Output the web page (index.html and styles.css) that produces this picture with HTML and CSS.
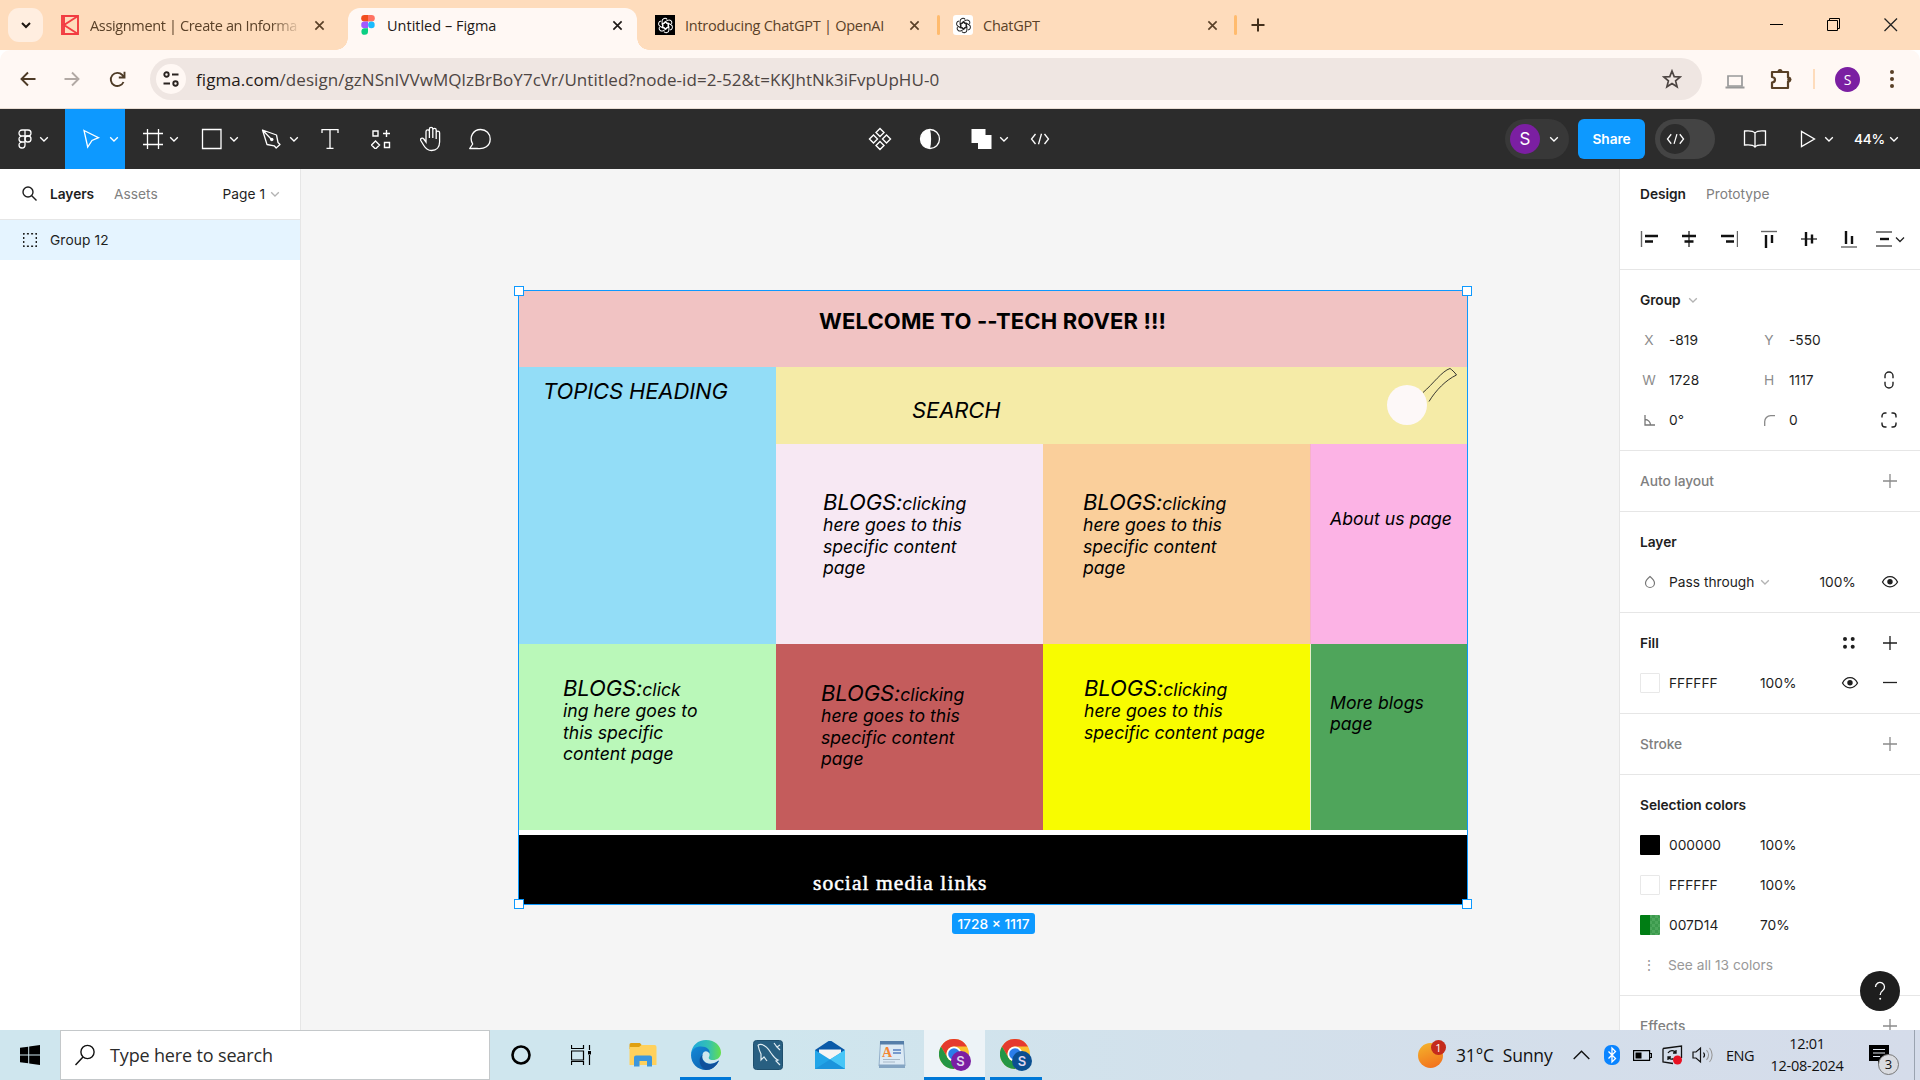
FILE: index.html
```html
<!DOCTYPE html>
<html lang="en">
<head>
<meta charset="utf-8">
<title>Untitled – Figma</title>
<link rel="stylesheet" href="styles.css">
</head>
<body>
<svg class="defs" width="0" height="0">
  <symbol id="chev" viewBox="0 0 10 10"><path d="M1.2 3.2 5 7l3.800-3.800" fill="none" stroke="currentColor" stroke-width="1.300"/></symbol>
  <symbol id="close" viewBox="0 0 12 12"><path d="M1.500 1.500l9 9M10.500 1.500l-9 9" fill="none" stroke="currentColor" stroke-width="1.800"/></symbol>
  <symbol id="plus" viewBox="0 0 16 16"><path d="M8 1v14M1 8h14" fill="none" stroke="currentColor" stroke-width="1.300"/></symbol>
  <symbol id="eye" viewBox="0 0 18 14"><path d="M1.500 7C5-.2 13-.2 16.500 7 13 13.400 5 13.400 1.500 7z" fill="none" stroke="currentColor" stroke-width="1.300"/><circle cx="9" cy="6.800" r="2.700" fill="currentColor"/></symbol>
  <symbol id="knot" viewBox="0 0 20 20"><g fill="none" stroke="currentColor" stroke-width="1.200"><path id="petal" d="M10 6.200 13.300 8v4.600M10 6.200 6 8.500V4.800a3.300 3.300 0 0 1 6-1.900"/><path d="M10 6.200 13.300 8v4.600M10 6.200 6 8.500V4.800a3.300 3.300 0 0 1 6-1.900" transform="rotate(60 10 10)"/><path d="M10 6.200 13.300 8v4.600M10 6.200 6 8.500V4.800a3.300 3.300 0 0 1 6-1.900" transform="rotate(120 10 10)"/><path d="M10 6.200 13.300 8v4.600M10 6.200 6 8.500V4.800a3.300 3.300 0 0 1 6-1.900" transform="rotate(180 10 10)"/><path d="M10 6.200 13.300 8v4.600M10 6.200 6 8.500V4.800a3.300 3.300 0 0 1 6-1.900" transform="rotate(240 10 10)"/><path d="M10 6.200 13.300 8v4.600M10 6.200 6 8.500V4.800a3.300 3.300 0 0 1 6-1.900" transform="rotate(300 10 10)"/></g></symbol>
  <symbol id="code" viewBox="0 0 20 12"><path d="M5.500 1 1.500 6l4 5M14.500 1l4 5-4 5M11.500.8l-3 10.400" fill="none" stroke="currentColor" stroke-width="1.300"/></symbol>
  <symbol id="chrome" viewBox="0 0 32 32"><circle cx="15" cy="15" r="15" fill="#fbc02d"/><path d="M2 7.500A15 15 0 0 1 28 7.500H15a7.500 7.500 0 0 0-6.500 11.300z" fill="#e53a2e"/><path d="M2 7.500A15 15 0 0 0 15 30l6.500-11.200a7.500 7.500 0 0 1-13 0z" fill="#249645"/><circle cx="15" cy="15" r="7.500" fill="#fff"/><circle cx="15" cy="15" r="5.800" fill="#2b7de9"/></symbol>
</svg>

<header class="tabstrip">
  <button class="tab-menu"><svg width="12" height="12" viewBox="0 0 12 12"><path d="M2 4l4 4 4-4" fill="none" stroke="#1d1510" stroke-width="2"/></svg></button>
  <div class="tab tab-a">
    <svg width="18" height="20" viewBox="0 0 18 20"><path d="M1 1h16v18H1zM17 1 3 10l14 9M3 1v18" fill="none" stroke="#f23c41" stroke-width="1.900"/></svg>
    <span class="tab-title fade">Assignment | Create an Informa</span>
    <svg class="x" width="11" height="11"><use href="#close"/></svg>
  </div>
  <div class="tab active">
    <svg width="14" height="20" viewBox="0 0 14 20"><path d="M7 0H3.500a3.300 3.300 0 0 0 0 6.600H7z" fill="#f24e1e"/><path d="M7 0h3.500a3.300 3.300 0 0 1 0 6.600H7z" fill="#ff7262"/><path d="M7 6.600H3.500a3.300 3.300 0 0 0 0 6.600H7z" fill="#a259ff"/><circle cx="10.400" cy="9.900" r="3.300" fill="#1abcfe"/><path d="M7 13.200H3.500A3.300 3.300 0 1 0 7 16.500z" fill="#0acf83"/></svg>
    <span class="tab-title">Untitled – Figma</span>
    <svg class="x" width="11" height="11"><use href="#close"/></svg>
  </div>
  <div class="tab tab-c">
    <span class="fav dark"><svg width="17" height="17"><use href="#knot"/></svg></span>
    <span class="tab-title">Introducing ChatGPT | OpenAI</span>
    <svg class="x" width="11" height="11"><use href="#close"/></svg>
  </div>
  <div class="tab tab-d">
    <span class="fav"><svg width="17" height="17"><use href="#knot"/></svg></span>
    <span class="tab-title">ChatGPT</span>
    <svg class="x" width="11" height="11"><use href="#close"/></svg>
  </div>
  <svg class="newtab" width="14" height="14" viewBox="0 0 14 14"><path d="M7 .5v13M.5 7h13" stroke="#43301c" stroke-width="2"/></svg>
  <div class="window-controls">
    <svg width="14" height="14" viewBox="0 0 14 14"><path d="M0 6.500h13" stroke="#000"/></svg>
    <svg width="14" height="14" viewBox="0 0 14 14"><path d="M.5 2.500h10v10H.5zM2.500 2.500v-2h10v10h-2" fill="none" stroke="#000"/></svg>
    <svg width="14" height="14" viewBox="0 0 14 14"><path d="M.5.5l12.500 12.500M13 .5.500 13" stroke="#222" stroke-width="1.300"/></svg>
  </div>
</header>

<nav class="navbar">
  <svg class="nav-back" width="16" height="16" viewBox="0 0 16 16"><path d="M15.500 8H2M8 1.500 1.500 8 8 14.500" fill="none" stroke="#4e3b26" stroke-width="1.900"/></svg>
  <svg class="nav-fwd" width="16" height="16" viewBox="0 0 16 16"><path d="M.5 8H14M8 1.500 14.500 8 8 14.500" fill="none" stroke="#b2a9a4" stroke-width="1.900"/></svg>
  <svg class="nav-reload" width="17" height="17" viewBox="0 0 17 17"><path d="M14.500 11A6.600 6.600 0 1 1 13.300 4l1.500 2M15.500.8v5.700H9.800" fill="none" stroke="#4e3b26" stroke-width="1.900"/></svg>
  <div class="omnibox">
    <span class="site-info"><svg width="16" height="16" viewBox="0 0 16 16"><g fill="none" stroke="#2a2320" stroke-width="1.900"><circle cx="3.500" cy="3.500" r="2.200"/><path d="M9 3.500h6.500M.5 12.500H7"/><circle cx="12.500" cy="12.500" r="2.200"/></g></svg></span>
    <span class="url"><b>figma.com</b>/design/gzNSnIVVwMQlzBrBoY7cVr/Untitled?node-id=2-52&amp;t=KKJhtNk3iFvpUpHU-0</span>
    <svg width="20" height="20" viewBox="0 0 20 20"><path d="M10 2l2.200 5.600 6 .4-4.600 3.900 1.500 5.900L10 14.500l-5.100 3.300 1.500-5.900L1.800 8l6-.4z" fill="none" stroke="#4d4542" stroke-width="1.700"/></svg>
  </div>
  <svg class="nav-laptop" width="20" height="14" viewBox="0 0 20 14"><path d="M3 1h14v10H3z" fill="none" stroke="#999" stroke-width="1.700"/><path d="M.5 12.500h19" stroke="#999" stroke-width="2"/></svg>
  <svg class="nav-puzzle" width="22" height="22" viewBox="0 0 22 22"><path d="M2 4h16v5.500c3 0 3 4 0 4V20H2v-5.500c4-.5 4-5 0-5.500z" fill="none" stroke="#594026" stroke-width="2.200" stroke-linejoin="round"/><path d="M7.500 3.500a2.500 2.500 0 0 1 5 0z" fill="#594026"/><circle cx="19.300" cy="11.500" r="2" fill="#594026"/></svg>
  <i class="nav-sep"></i>
  <span class="avatar small">S</span>
  <svg class="nav-dots" width="4" height="18" viewBox="0 0 4 18" fill="#594026"><circle cx="2" cy="2" r="2"/><circle cx="2" cy="9" r="2"/><circle cx="2" cy="16" r="2"/></svg>
</nav>

<div class="toolbar">
  <div class="tool menu"><svg width="14" height="20" viewBox="0 0 14 20"><path d="M7 1H4a3 3 0 0 0 0 6h3zM7 1h3a3 3 0 0 1 0 6H7zM7 7H4a3 3 0 0 0 0 6h3zM7 13H4a3 3 0 1 0 3 3z" fill="none" stroke="#fff" stroke-width="1.300"/><circle cx="10" cy="10" r="3" fill="none" stroke="#fff" stroke-width="1.300"/></svg><svg class="chev"><use href="#chev"/></svg></div>
  <div class="tool drop selected"><svg width="24" height="24" viewBox="0 0 24 24"><path d="M4 3.500l14.500 7.200-6.500 2.800-4.300 6.500z" fill="none" stroke="#fff" stroke-width="1.300"/></svg><svg class="chev"><use href="#chev"/></svg></div>
  <div class="tool drop"><svg width="24" height="24" viewBox="0 0 24 24"><path d="M7.500 2v20M18.500 2v20M3 6.500h20M3 17.500h20" stroke="#fff" stroke-width="1.300"/></svg><svg class="chev"><use href="#chev"/></svg></div>
  <div class="tool drop"><svg width="24" height="24" viewBox="0 0 24 24"><path d="M2.500 2.500h18.500v19h-18.500z" fill="none" stroke="#fff" stroke-width="1.300"/></svg><svg class="chev"><use href="#chev"/></svg></div>
  <div class="tool drop"><svg width="24" height="24" viewBox="0 0 24 24"><path d="M2.500 3l14 5 1.500 7.500 2 2-3.800 3.500-2-2.200L7 17.500zM3 3.500l8.500 9" fill="none" stroke="#fff" stroke-width="1.300" stroke-linejoin="round"/><circle cx="11.800" cy="12.500" r="1.700" fill="#fff"/></svg><svg class="chev"><use href="#chev"/></svg></div>
  <div class="tool w50"><svg width="20" height="22" viewBox="0 0 20 22"><path d="M2 5V1.700h16V5M10 1.700v18.600M6.500 20.300h7" fill="none" stroke="#fff" stroke-width="1.300"/></svg></div>
  <div class="tool w52"><svg width="20" height="20" viewBox="0 0 20 20"><path d="M2 2h5v5H2zM13.500 13.500h5v5h-5zM4.500 12l4 4-4 4-4-4zM15.500 1v7M12 4.500h7" fill="none" stroke="#fff" stroke-width="1.400"/></svg></div>
  <div class="tool w49"><svg width="24" height="26" viewBox="0 0 24 26"><path d="M6 16V5.500a1.700 1.700 0 0 1 3.400 0V12 3a1.700 1.700 0 0 1 3.400 0v9V4a1.700 1.700 0 0 1 3.400 0v9V6.800a1.700 1.700 0 0 1 3.400 0V16c0 5-3 8.500-8 8.500-4 0-6-2-7.800-5L.8 14.500c-1-2 1.500-3.300 3-1.500z" fill="none" stroke="#fff" stroke-width="1.300"/></svg></div>
  <div class="tool w50"><svg width="24" height="24" viewBox="0 0 24 24"><path d="M.7 21.500l3-4.500C-.3 10 4.200 2.500 11.700 2.500c5.500 0 9.500 4.300 9.500 9.500 0 7-6 10.500-13 9.500z" fill="none" stroke="#fff" stroke-width="1.300" stroke-linejoin="round"/></svg></div>
  <div class="tool-center">
    <div class="tool w50"><svg width="24" height="24" viewBox="0 0 24 24"><path d="M12 1.500l4 4-4 4-4-4zM12 14.500l4 4-4 4-4-4zM5.500 8l4 4-4 4-4-4zM18.500 8l4 4-4 4-4-4z" fill="none" stroke="#fff" stroke-width="1.400"/></svg></div>
    <div class="tool w50"><svg width="22" height="22" viewBox="0 0 22 22"><circle cx="11" cy="11" r="9.500" fill="none" stroke="#fff" stroke-width="1.300"/><path d="M11 1.500a9.500 9.500 0 0 0 0 19c1.500-5.500 1.500-13.500 0-19z" fill="#fff"/></svg></div>
    <div class="tool drop"><svg width="24" height="24" viewBox="0 0 24 24"><path d="M1.500 2h14v6h6v14H8v-6H1.500z" fill="#fff"/></svg><svg class="chev"><use href="#chev"/></svg></div>
    <div class="tool w50"><svg width="20" height="12"><use href="#code"/></svg></div>
  </div>
  <div class="tool-right">
    <div class="user-pill"><span class="avatar">S</span><svg class="chev"><use href="#chev"/></svg></div>
    <button class="share">Share</button>
    <div class="devmode"><span><svg width="19" height="12"><use href="#code"/></svg></span></div>
    <svg class="book" width="24" height="20" viewBox="0 0 24 20"><path d="M12 4C10 1.500 6 1.500 1.500 2v14c4.500-.5 8.500-.5 10.500 2 2-2.500 6-2.500 10.500-2V2C18 1.500 14 1.500 12 4zv14" fill="none" stroke="#fff" stroke-width="1.300"/></svg>
    <svg class="play" width="16" height="18" viewBox="0 0 16 18"><path d="M1.500 1.500v15l13-7.500z" fill="none" stroke="#fff" stroke-width="1.300"/></svg>
    <svg class="chev play-chev"><use href="#chev"/></svg>
    <span class="zoom">44%</span>
    <svg class="chev"><use href="#chev"/></svg>
  </div>
</div>

<main class="workspace">
  <aside class="layers">
    <div class="layers-head">
      <svg width="16" height="16" viewBox="0 0 16 16"><circle cx="6" cy="6" r="5" fill="none" stroke="#1e1e1e" stroke-width="1.400"/><path d="M9.500 9.500l5 5" stroke="#1e1e1e" stroke-width="1.400"/></svg>
      <b class="lh-layers">Layers</b><span class="lh-assets">Assets</span><span class="lh-page">Page 1</span><svg class="chev grey"><use href="#chev"/></svg>
    </div>
    <div class="layer-row"><svg width="14" height="14" viewBox="0 0 14 14"><rect x=".7" y=".7" width="12.600" height="12.600" fill="none" stroke="#222" stroke-width="1.400" stroke-dasharray="2 2.200" stroke-dashoffset="1"/></svg><span>Group 12</span></div>
  </aside>

  <section class="canvas">
    <div class="frame">
      <div class="cell c-title"><h1>WELCOME TO --TECH ROVER !!!</h1></div>
      <div class="cell c-topics"><p class="big">TOPICS HEADING</p></div>
      <div class="cell c-search"><p class="big">SEARCH</p>
        <svg width="72" height="60" viewBox="0 0 72 60"><circle cx="21" cy="38" r="20" fill="#fdf8f8"/><path d="M37 25.500C47 17 56 4 64 1.500c1 .5 5 4 6.500 6.500C60 13 50 23 43 34.500" fill="none" stroke="#222" stroke-width=".9"/></svg>
      </div>
      <div class="cell c-b1"><p><span class="big">BLOGS:</span>clicking</p><p>here goes to this</p><p>specific content</p><p>page</p></div>
      <div class="cell c-b2"><p><span class="big">BLOGS:</span>clicking</p><p>here goes to this</p><p>specific content</p><p>page</p></div>
      <div class="cell c-about"><p>About us page</p></div>
      <div class="cell c-b3"><p><span class="big">BLOGS:</span>click</p><p>ing here goes to</p><p>this specific</p><p>content page</p></div>
      <div class="cell c-b4"><p><span class="big">BLOGS:</span>clicking</p><p>here goes to this</p><p>specific content</p><p>page</p></div>
      <div class="cell c-b5"><p><span class="big">BLOGS:</span>clicking</p><p>here goes to this</p><p>specific content page</p></div>
      <div class="cell c-more"><p>More blogs</p><p>page</p></div>
      <div class="cell c-footer"><p>social media links</p></div>
      <div class="selection"><i class="h tl"></i><i class="h tr"></i><i class="h bl"></i><i class="h br"></i></div>
    </div>
    <div class="size-badge">1728 × 1117</div>
  </section>

  <aside class="props">
    <div class="ptabs"><b>Design</b><span>Prototype</span></div>
    <div class="align">
      <svg width="18" height="18" viewBox="0 0 18 18"><path d="M1.500 1v16" stroke="#666" stroke-width="1.400"/><path d="M5 6h13M5 11.500h8" stroke="#111" stroke-width="2.400"/></svg>
      <svg width="18" height="18" viewBox="0 0 18 18"><path d="M9 1v16" stroke="#333" stroke-width="1.400"/><path d="M2 6h14M4.500 11.500h9" stroke="#111" stroke-width="2.400"/></svg>
      <svg width="18" height="18" viewBox="0 0 18 18"><path d="M17.500 1v16" stroke="#666" stroke-width="1.400"/><path d="M1 6h13M6 11.500h8" stroke="#111" stroke-width="2.400"/></svg>
      <svg width="18" height="18" viewBox="0 0 18 18"><path d="M1 1.500h16" stroke="#666" stroke-width="1.400"/><path d="M6 5v13M12 5v8" stroke="#111" stroke-width="2.400"/></svg>
      <svg width="18" height="18" viewBox="0 0 18 18"><path d="M1 9h16" stroke="#333" stroke-width="1.400"/><path d="M6 2v14M12 4.500v9" stroke="#111" stroke-width="2.400"/></svg>
      <svg width="18" height="18" viewBox="0 0 18 18"><path d="M1 17h16" stroke="#666" stroke-width="1.400"/><path d="M6 1v13M12 6v8" stroke="#111" stroke-width="2.400"/></svg>
      <svg class="spread" width="30" height="18" viewBox="0 0 30 18"><path d="M1 2h16M1 16h16" stroke="#555" stroke-width="1.500"/><path d="M5 9h9" stroke="#111" stroke-width="2.400"/><path d="M21 7.500l4 4 4-4" fill="none" stroke="#222" stroke-width="1.300"/></svg>
    </div>
    <div class="sec">
      <div class="row"><b>Group</b><svg class="chev grey g8"><use href="#chev"/></svg></div>
      <div class="row g4"><i>X</i><span>-819</span><i>Y</i><span>-550</span></div>
      <div class="row g4"><i>W</i><span>1728</span><i>H</i><span>1117</span><svg width="10" height="18" viewBox="0 0 10 18"><path d="M1 7.200V5a4 4 0 0 1 8 0v2.200M1 10.800V13a4 4 0 0 0 8 0v-2.200" fill="none" stroke="#222" stroke-width="1.400"/></svg></div>
      <div class="row g4"><i><svg width="11" height="11" viewBox="0 0 11 11"><path d="M1 0v10h10M1 4.500A5.500 5.500 0 0 1 6.500 10" fill="none" stroke="#777" stroke-width="1.300"/></svg></i><span>0°</span><i><svg width="11" height="11" viewBox="0 0 11 11"><path d="M.7 11V7A6 6 0 0 1 6.700.7H11" fill="none" stroke="#888" stroke-width="1.300"/></svg></i><span>0</span><svg width="16" height="16" viewBox="0 0 16 16"><path d="M1 5.500V4a3 3 0 0 1 3-3h1.500M10.500 1H12a3 3 0 0 1 3 3v1.500M15 10.500V12a3 3 0 0 1-3 3h-1.500M5.500 15H4a3 3 0 0 1-3-3v-1.500" fill="none" stroke="#222" stroke-width="1.400"/></svg></div>
    </div>
    <div class="sec"><div class="row"><b class="dim">Auto layout</b><svg class="end grey2" width="16" height="16"><use href="#plus"/></svg></div></div>
    <div class="sec">
      <div class="row"><b>Layer</b></div>
      <div class="row"><svg class="drop-ic" width="12" height="14" viewBox="0 0 12 14"><path d="M6 1.500C3 4 1.500 6 1.500 8a4.500 4.500 0 0 0 9 0c0-2-1.500-4-4.500-6.500z" fill="none" stroke="#777" stroke-width="1.200"/></svg><span class="blend">Pass through</span><svg class="chev grey"><use href="#chev"/></svg><span class="op">100%</span><svg class="end layer-eye" width="18" height="14"><use href="#eye"/></svg></div>
    </div>
    <div class="sec">
      <div class="row"><b>Fill</b><svg class="styles" width="12" height="12" viewBox="0 0 12 12"><g fill="#1e1e1e"><circle cx="2" cy="2" r="2"/><circle cx="9.700" cy="2" r="2"/><circle cx="2" cy="9.700" r="2"/><circle cx="9.700" cy="9.700" r="2"/></g></svg><svg class="end" width="16" height="16"><use href="#plus"/></svg></div>
      <div class="row"><i class="sw white"></i><span class="hex">FFFFFF</span><span class="pc">100%</span><svg class="fill-eye" width="18" height="14"><use href="#eye"/></svg><svg class="end" width="16" height="16" viewBox="0 0 16 16"><path d="M1 7.500h14" stroke="#222" stroke-width="1.300"/></svg></div>
    </div>
    <div class="sec"><div class="row"><b class="dim">Stroke</b><svg class="end grey2" width="16" height="16"><use href="#plus"/></svg></div></div>
    <div class="sec">
      <div class="row"><b>Selection colors</b></div>
      <div class="row"><i class="sw black"></i><span class="hex">000000</span><span class="pc">100%</span></div>
      <div class="row"><i class="sw white"></i><span class="hex">FFFFFF</span><span class="pc">100%</span></div>
      <div class="row"><i class="sw green"></i><span class="hex">007D14</span><span class="pc">70%</span></div>
      <div class="row see"><i>⋮</i><span>See all 13 colors</span></div>
    </div>
    <div class="sec"><div class="row"><b class="dim">Effects</b><svg class="end grey2" width="16" height="16"><use href="#plus"/></svg></div></div>
    <div class="help"><svg width="14" height="20" viewBox="0 0 14 20"><path d="M2.500 6a4.500 4.500 0 1 1 7.200 3.500C8 10.800 7.200 11.500 7.200 14" fill="none" stroke="#fff" stroke-width="1.300"/><circle cx="7.200" cy="17.800" r="1" fill="#fff"/></svg></div>
  </aside>
</main>

<footer class="taskbar">
  <div class="start"><svg width="20" height="20" viewBox="0 0 20 20"><path d="M0 2.800 8.200 1.700v7.800H0zM9.200 1.500 20 0v9.500H9.200zM0 10.500h8.200v7.800L0 17.200zM9.200 10.500H20V20L9.200 18.500z"/></svg></div>
  <div class="search"><svg width="22" height="22" viewBox="0 0 22 22"><circle cx="13.500" cy="8" r="6.600" fill="none" stroke="#111" stroke-width="1.400"/><path d="M9 13l-7.500 8" stroke="#111" stroke-width="1.400"/></svg><span>Type here to search</span></div>
  <div class="app w61"><svg width="22" height="22" viewBox="0 0 22 22"><circle cx="11" cy="11" r="8.500" fill="none" stroke="#000" stroke-width="2.600"/></svg></div>
  <div class="app w59"><svg width="20" height="20" viewBox="0 0 20 20"><path d="M.5 0v3.500h12V0M.5 6h12v9H.5zM.5 20v-3.500h12V20M18.500 0v5M18.500 10v10" fill="none" stroke="#000" stroke-width="1.200"/><path d="M17 6h3v3.500h-3z"/></svg></div>
  <div class="app w65"><svg width="28" height="24" viewBox="0 0 28 24"><path d="M.5 1.500A1.500 1.500 0 0 1 2 0h9l2 2.500V6H.5z" fill="#e0a010"/><path d="M.5 4H10l2.500-2h13a2 2 0 0 1 2 2v18H.5z" fill="#ffd15c"/><path d="M5 23.500v-9a2 2 0 0 1 2-2h14a2 2 0 0 1 2 2v9h-5v-5.500h-7.500v5.500z" fill="#3c97dd"/></svg></div>
  <div class="app w61 open"><svg width="30" height="30" viewBox="0 0 30 30"><defs><linearGradient id="e1" x1="0" x2="1"><stop offset="0" stop-color="#1ea7e0"/><stop offset=".6" stop-color="#35c1b1"/><stop offset="1" stop-color="#66e04a"/></linearGradient><linearGradient id="e2" x1="0" y1="0" x2="1" y2="1"><stop offset="0" stop-color="#1489d8"/><stop offset="1" stop-color="#0c59a4"/></linearGradient></defs><path d="M0 14C1 5 7 0 15 0c9 0 15 6 15 12.500 0 5-4 7.500-8 7.500-3.500 0-5-1.500-4-3 2-3.500-1-7-6-7C6 10 1 13 0 14z" fill="url(#e1)"/><path d="M0 15c.5-6 5-8.500 10-8.500 6 0 9.500 3.500 8.500 7-2-3-6-3-7 1-1.500 6 4 10 9.500 9 3-.5 5-2 7-3C25 27 20 30 15 30 6.500 30 0 23.500 0 15z" fill="url(#e2)"/><path d="M11.500 14.500c-2 6 3 10.500 9.500 9.500 3-.5 5-2 7-3.500C25 27 20 30 15 30c-6-2-9-11-3.500-15.500z" fill="#10509b"/></svg></div>
  <div class="app w63"><svg width="30" height="30" viewBox="0 0 30 30"><rect x=".5" y=".5" width="29" height="29" rx="3" fill="#285f81" stroke="#1f4f6d"/><path d="M5 5c5-2 10 3 13 8 3 4 4 6 7 7l-2 1 4 4M5 5c1 5 2 7 3 9v6l3-3 3 4M21 3l3 4 3-2M23 6l4 4" fill="none" stroke="#e0ecf2" stroke-width="1.200"/></svg></div>
  <div class="app w62"><svg width="30" height="28" viewBox="0 0 30 28"><path d="M0 9 12.500.8a4 4 0 0 1 5 0L30 9v6H0z" fill="#0a5aa8"/><path d="M4 8.500h22V18H4z" fill="#f4f4f4"/><path d="M0 9l15 9.500L30 9v19H0z" fill="#22a5e8"/><path d="M15 18.500 30 28V9z" fill="#47c6f7"/><path d="M0 28h30L15 18.500z" fill="#1b94dc"/></svg></div>
  <div class="app w61"><svg width="28" height="28" viewBox="0 0 28 28"><path d="M2.500 1h23L27 25H1z" fill="#dceaf5" stroke="#93afc9"/><path d="M2 0h24v3.500H2z" fill="#557ea9"/><path d="M1 23.500h26V27H1z" fill="#85a5c3"/><text x="4" y="16" class="wp">A</text><path d="M15 9h8M15 12h8" stroke="#557fc0" stroke-width="1.500"/><path d="M5 18.500h17M5 21h12" stroke="#a8b8c8"/></svg></div>
  <div class="app w61 open current"><div class="chrome"><svg width="32" height="32"><use href="#chrome"/></svg><em>S</em></div></div>
  <div class="app w62 open second"><div class="chrome blue"><svg width="32" height="32"><use href="#chrome"/></svg><em>S</em></div></div>
  <div class="tray">
    <div class="sun"><b>1</b></div>
    <span class="weather">31°C&nbsp; Sunny</span>
    <svg class="t-chev" width="17" height="10" viewBox="0 0 17 10"><path d="M.7 9 8.500 1.200 16.300 9" fill="none" stroke="#111" stroke-width="1.400"/></svg>
    <svg class="t-bt" width="16" height="20" viewBox="0 0 16 20"><rect width="16" height="20" rx="7" fill="#0a84ff"/><path d="M4.500 6.500l7 7L8 17V3l3.500 3.500-7 7" fill="none" stroke="#fff" stroke-width="1.300"/></svg>
    <svg class="t-bat" width="19" height="11" viewBox="0 0 19 11"><path d="M.6.6h16v9.800H.6zM17 3.500h1.500v4H17" fill="none" stroke="#000" stroke-width="1.200"/><path d="M2.500 2.500h6v6h-6z"/></svg>
    <svg class="t-sync" width="21" height="20" viewBox="0 0 21 20"><path d="M1 3.500 19.500 1v12M1 3.500V17l10 1.500M6 8c2-3 6-3 7.500-.5M14 5v3h-3M6 15v-3h3M6.500 12.500c1.500 2 4 2 5 1" fill="none" stroke="#111" stroke-width="1.300"/><circle cx="15.500" cy="15" r="4.500" fill="#e81123"/></svg>
    <svg class="t-vol" width="21" height="18" viewBox="0 0 21 18"><path d="M1 6h3l4.500-4v14L4 12H1zM11.500 6.500c1.200 1.500 1.200 3.500 0 5" fill="none" stroke="#111" stroke-width="1.200"/><path d="M14.500 4c2.500 3 2.500 7 0 10M17.500 2c3.500 4 3.500 10 0 14" fill="none" stroke="#999" stroke-width="1.100"/></svg>
    <span class="lang">ENG</span>
    <div class="clock"><span>12:01</span><span class="date">12-08-2024</span></div>
    <div class="notif"><svg width="20" height="20" viewBox="0 0 20 20"><path d="M0 0h20v16h-6l-5 4v-4H0z"/><path d="M4 4.500h12M4 8h12M4 11.500h7" stroke="#dfe5ee" stroke-width="1.200"/></svg><b>3</b></div>
    <i class="peek"></i>
  </div>
</footer>
</body>
</html>
```

FILE: styles.css
```css
* { box-sizing: border-box; }
html, body { margin: 0; width: 1920px; height: 1080px; overflow: hidden; }
body { display: flex; flex-direction: column; font-family: "Inter", sans-serif; font-size: 13.75px; color: #1e1e1e; white-space: nowrap; }
svg { display: block; flex: none; }
p, h1 { margin: 0; }
button { border: 0; padding: 0; font: inherit; }
i, em { font-style: normal; }
.defs { position: absolute; }
.chev { width: 10px; height: 10px; color: #fff; }
.chev.grey { color: #b3b3b3; }

/* Browser tabs */
.tabstrip { height: 50px; flex: none; background: #fedcbc; display: flex; align-items: center; font-family: "Open Sans", "Noto Sans", sans-serif; font-size: 14.5px; color: #5a4128; }
.tab-menu { width: 35px; height: 34px; margin-left: 8px; border-radius: 11px; background: #ffeee0; display: grid; place-items: center; }
.tab { display: flex; align-items: center; height: 42px; margin-top: 0; position: relative; }
.tab .x { margin-left: auto; color: #5a4128; }
.tab-title { letter-spacing: -0.25px; }
.tab-a { width: 305px; padding: 0 23px 0 18px; }
.tab-a .tab-title { width: 212px; margin-left: 11px; letter-spacing: -0.35px; }
.fade { -webkit-mask-image: linear-gradient(90deg, #000 85%, transparent); mask-image: linear-gradient(90deg, #000 85%, transparent); }
.active { width: 289px; height: 42px; align-self: flex-end; background: #fff8f4; border-radius: 12px 12px 0 0; padding: 0 14px 8px 13px; color: #1f1a17; }
.active .x { color: #1f1a17; }
.active .tab-title { margin-left: 12px; letter-spacing: 0; }
.active::before, .active::after { content: ""; position: absolute; bottom: 0; width: 12px; height: 12px; }
.active::before { left: -12px; background: radial-gradient(circle at 0 0, transparent 11.5px, #fff8f4 12px); }
.active::after { right: -12px; background: radial-gradient(circle at 100% 0, transparent 11.5px, #fff8f4 12px); }
.fav { width: 20px; height: 20px; border-radius: 3px; background: #fff; color: #222; display: grid; place-items: center; }
.fav.dark { background: #000; color: #fff; border-radius: 0; }
.tab-c { width: 303px; padding: 0 20px 0 18px; }
.tab-d { width: 297px; padding: 0 19px 0 13px; }
.tab-c .tab-title, .tab-d .tab-title { margin-left: 10px; }
.tab-c::after, .tab-d::after { content: ""; position: absolute; right: 0; top: 11px; width: 3px; height: 20px; border-radius: 2px; background: #ffbb6e; }
.newtab { margin-left: 14px; }
.window-controls { margin-left: auto; margin-right: 22px; display: flex; gap: 43px; }

/* Address bar */
.navbar { height: 59px; flex: none; background: #fff8f4; border-bottom: 1px solid #e9ddd3; display: flex; align-items: center; position: relative; border-radius: 10px 10px 0 0; font-family: "Open Sans", "Noto Sans", sans-serif; }
.nav-back { margin-left: 20px; }
.nav-fwd { margin-left: 28px; }
.nav-reload { margin-left: 29px; }
.omnibox { margin-left: 24px; width: 1552px; height: 42px; border-radius: 21px; background: #efe6e2; display: flex; align-items: center; padding: 0 20px 0 6px; }
.omnibox > svg { margin-left: auto; }
.site-info { width: 30px; height: 30px; border-radius: 50%; background: #fff8f4; display: grid; place-items: center; }
.url { margin-left: 10px; font-size: 17px; letter-spacing: 0.06px; color: #4d4542; }
.url b { font-weight: 400; color: #1f1a17; }
.nav-laptop { margin: 5px 0 0 23px; }
.nav-puzzle { margin-left: 25px; }
.nav-sep { width: 2px; height: 20px; margin-left: 21px; background: #fedcbc; }
.avatar { width: 30px; height: 30px; border-radius: 50%; background: #7b1fa2; color: #fff; display: grid; place-items: center; font-size: 17px; }
.avatar.small { width: 25px; height: 25px; margin-left: 20px; font-size: 14px; }
.nav-dots { margin-left: 30px; }

/* Editor toolbar */
.toolbar { height: 60px; flex: none; background: #2c2c2c; display: flex; color: #fff; }
.tool { display: flex; align-items: center; justify-content: center; height: 60px; }
.tool.menu { width: 65px; justify-content: flex-start; padding-left: 18px; gap: 7px; }
.tool.drop { width: 60px; justify-content: flex-start; padding-left: 15px; gap: 5px; }
.selected { background: #0d99ff; }
.w49 { width: 49px; }
.w50 { width: 50px; }
.w52 { width: 52px; }
.tool-center { display: flex; margin-left: 349px; }
.tool-right { display: flex; align-items: center; margin-left: auto; padding-right: 21px; }
.user-pill { width: 64px; height: 40px; border-radius: 20px; background: #383838; display: flex; align-items: center; padding-left: 5px; gap: 9px; margin-right: 9px; }
.share { width: 67px; height: 40px; border-radius: 6px; background: #0d99ff; color: #fff; font-weight: 600; letter-spacing: -0.1px; }
.devmode { width: 60px; height: 40px; border-radius: 20px; background: #444; margin-left: 10px; padding: 5px; }
.devmode span { width: 30px; height: 30px; border-radius: 50%; background: #2c2c2c; display: grid; place-items: center; }
.book { margin-left: 28px; }
.play { margin-left: 33px; }
.play-chev { margin-left: 8px; }
.zoom { width: 30px; margin: 0 5px 0 20px; font-weight: 500; letter-spacing: -0.3px; }

/* Workspace */
.workspace { height: 861px; flex: none; display: flex; overflow: hidden; }
.layers { width: 301px; background: #fff; border-right: 1px solid #e6e6e6; }
.layers-head { height: 51px; border-bottom: 1px solid #e6e6e6; display: flex; align-items: center; padding: 0 20px 0 22px; }
.layers b, .props b { font-weight: 600; letter-spacing: -0.05px; }
.lh-layers { margin-left: 12px; width: 64px; }
.lh-assets { color: #808080; }
.lh-page { margin-left: auto; margin-right: 5px; }
.layer-row { height: 40px; background: #e5f4ff; display: flex; align-items: center; padding-left: 23px; gap: 13px; letter-spacing: 0.1px; }

.canvas { flex: 1; background: #f5f5f5; padding: 122px 0 0 218px; color: #000; }
.frame { position: relative; width: 948px; height: 613px; background: #fff; display: grid; grid-template-columns: 257px 267px 267px 157px; grid-template-rows: 76px 77px 200px 186px 5px 69px; font-style: italic; font-weight: 450; font-size: 17.6px; line-height: 21.4px; letter-spacing: 0.02px; }
.big { font-size: 22px; letter-spacing: -0.1px; }
.c-title { grid-column: 1 / 5; background: #f1c3c3; padding: 17px 0 0 300px; }
.c-title h1 { font-size: 22px; line-height: 27px; font-style: normal; font-weight: 700; letter-spacing: 0.13px; }
.c-topics { grid-row: 2 / 4; background: #93ddf7; padding: 14px 0 0 24px; }
.c-search { grid-column: 2 / 5; background: #f5eba7; display: flex; justify-content: space-between; padding: 0 9px 0 136px; }
.c-search p { padding-top: 33px; }
.c-b1 { background: #f7e8f3; padding: 48px 0 0 47px; }
.c-b2 { background: #facf9b; padding: 48px 0 0 40px; }
.c-about { background: #fcb3e5; border-left: 1px solid #f6b3c9; padding: 64px 0 0 19px; }
.c-b3 { background: #baf8b9; padding: 34px 0 0 44px; }
.c-b4 { background: #c45c5c; padding: 39px 0 0 45px; }
.c-b5 { background: #f8fc00; padding: 34px 0 0 41px; }
.c-more { background: #4fa55b; border-left: 1px solid #e6f0c8; padding: 48px 0 0 19px; }
.c-footer { grid-column: 1 / 5; grid-row: 6; background: #000; color: #fff; padding: 36px 0 0 294px; }
.c-footer p { font: 400 21.5px/24px "Liberation Serif", serif; letter-spacing: 1.07px; -webkit-text-stroke: 0.5px #fff; }
.selection { position: absolute; inset: -1px; border: 1.5px solid #0d99ff; }
.h { position: absolute; width: 10px; height: 10px; background: #fff; border: 1.5px solid #0d99ff; }
.tl { left: -5px; top: -5px; }
.tr { right: -5px; top: -5px; }
.bl { left: -5px; bottom: -5px; }
.br { right: -5px; bottom: -5px; }
.size-badge { width: 83px; height: 21px; margin: 9px 0 0 433px; border-radius: 3px; background: #0d99ff; color: #fff; font-size: 13.75px; font-weight: 500; text-align: center; line-height: 22px; }

/* Properties panel */
.props { width: 301px; background: #fff; border-left: 1px solid #e6e6e6; position: relative; }
.ptabs { height: 50px; padding-left: 20px; display: flex; align-items: center; gap: 20px; color: #808080; }
.ptabs b { color: #1e1e1e; }
.align { height: 51px; border-bottom: 1px solid #e6e6e6; display: flex; padding: 11px 0 0 20px; gap: 22px; }
.spread { margin-left: -5px; }
.sec { padding: 10px 0; border-bottom: 1px solid #e6e6e6; }
.row { height: 40px; display: flex; align-items: center; padding: 0 22px 0 20px; }
.row b.dim { color: #808080; font-weight: 500; }
.end { margin-left: auto; }
.layer-eye { margin-right: -1px; }
.grey2 { color: #8a8a8a; }
.g8 { margin-left: 7px; }
.row.g4 { display: grid; grid-template-columns: 20px 100px 20px 94px 32px; padding: 0 0 0 19px; }
.g4 i { display: grid; place-items: center; color: #8c8c8c; }
.g4 span { padding-left: 10px; }
.g4 > svg { justify-self: center; }
.drop-ic { margin-left: 4px; }
.blend { margin: 0 6px 0 13px; }
.op { margin-left: 49px; }
.styles { margin-left: auto; margin-right: 27px; }
.styles + .end, .fill-eye + .end { margin-left: 0; }
.fill-eye { margin-left: auto; margin-right: 23px; }
.sw { width: 20px; height: 20px; border-radius: 1px; margin-right: 9px; }
.sw.white { border: 1px solid #e8e8e8; }
.sw.black { background: #000; }
.sw.green { background: linear-gradient(90deg, #007d14 50%, transparent 50%), repeating-conic-gradient(#4ca65b 0 25%, #3c9a4d 0 50%) 0 0 / 6px 6px; }
.hex { width: 91px; }
.see { color: #999; }
.see i { width: 18px; text-align: center; margin-right: 10px; }
.help { position: absolute; right: 20px; bottom: 19px; width: 40px; height: 40px; border-radius: 50%; background: #1e1e1e; display: grid; place-items: center; }

/* Windows taskbar */
.taskbar { height: 50px; flex: none; background: linear-gradient(90deg, #cfe6ee 0 40%, #d3e0eb 65%, #d5dcea); display: flex; font-family: "Open Sans", "Noto Sans", sans-serif; color: #111; }
.start { width: 60px; display: grid; place-items: center; }
.search { width: 430px; background: #fff; border: 1px solid #c4c8ca; display: flex; align-items: center; padding-left: 13px; gap: 14px; font-size: 18px; color: #2b2b2b; letter-spacing: -0.15px; }
.app { display: grid; place-items: center; position: relative; }
.w59 { width: 59px; }
.w61 { width: 61px; }
.w62 { width: 62px; }
.w63 { width: 63px; }
.w65 { width: 65px; }
.open::after { content: ""; position: absolute; bottom: 0; left: 5px; right: 5px; height: 3px; background: #0078d7; }
.current { background: #edf3f7; margin-left: 2px; }
.current::after { left: 0; right: 0; }
.chrome { width: 32px; height: 32px; position: relative; }
.chrome em { position: absolute; right: 0; bottom: 0; width: 20px; height: 20px; border-radius: 50%; background: #7b1fa2; color: #dfd6ee; font: 600 13px/20px "Inter", sans-serif; text-align: center; }
.chrome.blue em { background: #0b4f91; }
.wp { font: bold 14px "Liberation Serif", serif; fill: #f58634; }
.tray { margin-left: auto; display: flex; align-items: center; }
.sun { width: 25px; height: 25px; border-radius: 50%; background: linear-gradient(160deg, #f4b62c, #f26a1b); position: relative; }
.sun b { position: absolute; left: 13px; top: -3px; width: 15px; height: 15px; border-radius: 50%; background: #c42b1c; color: #fff; font: 400 11px/15px "Open Sans", sans-serif; text-align: center; }
.weather { width: 98px; margin-left: 13px; font-size: 17.5px; letter-spacing: -0.15px; }
.t-chev { margin-left: 19px; }
.t-bt { margin-left: 14px; }
.t-bat { margin-left: 13px; }
.t-sync { margin-left: 10px; }
.t-vol { margin-left: 9px; }
.lang { width: 30px; margin-left: 13px; font-size: 14.5px; letter-spacing: -0.5px; }
.clock { width: 78px; margin-left: 12px; margin-right: 1px; display: flex; flex-direction: column; align-items: center; font-size: 14.5px; line-height: 22px; letter-spacing: -0.25px; }
.notif { width: 20px; height: 20px; margin-left: 22px; position: relative; }
.notif b { position: absolute; left: 9px; top: 9px; width: 21px; height: 21px; border: 1px solid #777; border-radius: 50%; background: #d9dbe0; font: 400 13px/19px "Open Sans", sans-serif; text-align: center; }
.peek { width: 1px; height: 50px; margin: 0 5px 0 25px; background: #9aa3b0; }
```
